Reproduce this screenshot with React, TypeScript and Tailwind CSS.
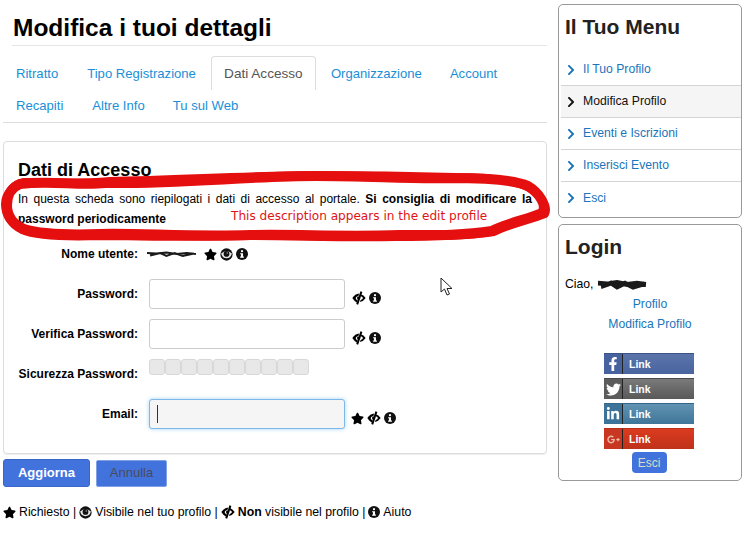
import { FaChevronRight, FaFacebookF, FaGooglePlusG, FaLinkedinIn, FaStar, FaTwitter } from 'react-icons/fa'
import { FC, ReactNode } from 'react'

const Star = () => <FaStar className="inline-block size-[13px] shrink-0 text-black" />

const Eye = () => (
    <svg viewBox="0 0 14 14" className="inline-block size-[13px] shrink-0">
        <circle cx="7" cy="7" r="6.6" fill="#111" />
        <path d="M1.2 6Q7 1.2 12.8 6Q11.5 11 7 11Q2.5 11 1.2 6Z" fill="#e8e8e8" />
        <circle cx="7" cy="6.4" r="3.1" fill="#111" />
        <circle cx="7.8" cy="5.4" r="0.8" fill="#aaa" />
    </svg>
)

const EyeOff = () => (
    <svg viewBox="0 0 14 14" className="inline-block size-[14px] shrink-0">
        <path d="M0.3 7Q3 3 7.2 2.6L6.4 5Q4.2 5.4 3.6 7Q4 8.6 5.6 9.4L4.9 11.4Q2 10 0.3 7Z" fill="#000" />
        <path d="M8.3 3Q11.8 4 13.7 7Q11.8 10 8 11L8.6 9Q10.5 8.4 11 7Q10.5 5.6 8.9 5.2Z" fill="#000" />
        <path d="M9.4 0.6L5.2 13.4" stroke="#000" strokeWidth="2" />
        <circle cx="6.6" cy="7" r="1.6" fill="#000" />
    </svg>
)

const Info = () => (
    <svg viewBox="0 0 14 14" className="inline-block size-[12px] shrink-0">
        <circle cx="7" cy="7" r="7" fill="#111" />
        <rect x="5.8" y="2.6" width="2.4" height="2.2" fill="#fff" />
        <path d="M4.8 6h3.4v4h1v1.4H4.8V10h1V7.4h-1Z" fill="#fff" />
    </svg>
)

// pen strokes hiding a user name
const Scribble = ({ width, height, heavy }: { width: number; height: number; heavy?: boolean }) => (
    <svg viewBox="0 0 50 8" width={width} height={height} preserveAspectRatio="none" className="shrink-0">
        <path
            d="M1 3L10 3.5L20 2.5L30 4L40 3L49 4M4 5.5L14 3L20 6L28 3L36 6L47 3.5"
            fill="none"
            stroke="#1a1a1a"
            strokeWidth={heavy ? 3.5 : 2}
        />
    </svg>
)

const Row: FC<{ label: string; children: ReactNode }> = ({ label, children }) => (
    <div className="flex h-10 items-center">
        <div className="w-[134px] text-right text-[12px] font-bold">{label}</div>
        <div className="ml-[11px] flex items-center">{children}</div>
    </div>
)

const Input = ({ focused }: { focused?: boolean }) => (
    <div
        className={
            focused
                ? 'flex h-[30px] w-[196px] items-center rounded-[3px] border border-[#7db8ea] bg-[#f5f5f5] pl-[7px] shadow-[0_0_4px_#a8d4f5]'
                : 'h-[30px] w-[196px] rounded-[3px] border border-[#cccccc] bg-white'
        }
    >
        {focused && <span className="h-[18px] w-px bg-[#333]" />}
    </div>
)

const menu = ['Il Tuo Profilo', 'Modifica Profilo', 'Eventi e Iscrizioni', 'Inserisci Evento', 'Esci']

const socials = [
    { icon: <FaFacebookF className="size-[14px]" />, left: 'bg-[#46639f]', right: 'bg-gradient-to-b from-[#5a74ab] to-[#4a659f]', top: 'border-[#3a5488]' },
    { icon: <FaTwitter className="size-[15px]" />, left: 'bg-[#5c5c5c]', right: 'bg-gradient-to-b from-[#7a7a7a] to-[#595959]', top: 'border-[#4a4a4a]' },
    { icon: <FaLinkedinIn className="size-[14px]" />, left: 'bg-[#3d7399]', right: 'bg-gradient-to-b from-[#6193b3] to-[#3f7598]', top: 'border-[#336688]' },
    { icon: <FaGooglePlusG className="size-[13px] text-[#f2b8a8]" />, left: 'bg-[#c73722]', right: 'bg-gradient-to-b from-[#da3b20] to-[#bf3219]', top: 'border-[#b83018]' },
]

const tabLink = 'block px-[13px] text-[13.1px] text-[#1a8fd6]'

export default function App() {
    return (
        <div className="relative h-[549px] w-[749px] overflow-hidden bg-white font-['Liberation_Sans',sans-serif] text-black">
            <div className="flex gap-[11px] pl-[3px] pt-1">
                <main className="w-[544px]">
                    <div className="ml-[9px] border-b border-[#e5e5e5] pb-[2px] pt-[8px]">
                        <h1 className="pl-px text-[24.5px] font-bold leading-[31px]">Modifica i tuoi dettagli</h1>
                    </div>
                    <nav className="mt-[10px] border-b border-[#dddddd]">
                        <ul className="flex gap-[2px] leading-[33px]">
                            <li className="pt-px"><a className={tabLink}>Ritratto</a></li>
                            <li className="ml-px pt-px"><a className={tabLink}>Tipo Registrazione</a></li>
                            <li className="w-[105px] rounded-t-[4px] border border-b-0 border-[#dddddd] text-center">
                                <a className="block text-[13.6px] text-[#555555]">Dati Accesso</a>
                            </li>
                            <li className="pt-px"><a className={tabLink}>Organizzazione</a></li>
                            <li className="pt-px"><a className={tabLink}>Account</a></li>
                        </ul>
                        <ul className="flex gap-[2px] leading-[32px]">
                            <li><a className={tabLink}>Recapiti</a></li>
                            <li className="ml-px"><a className={tabLink}>Altre Info</a></li>
                            <li><a className={tabLink}>Tu sul Web</a></li>
                        </ul>
                    </nav>

                    <section className="mt-[18px] h-[313px] rounded-[4px] border border-[#dddddd] px-[14px] pt-[17px] shadow-[0_1px_1px_#eee]">
                        <h2 className="text-[18px] font-bold leading-[22px]">Dati di Accesso</h2>
                        <p className="mt-[8px] text-justify text-[12px] leading-[20px]">
                            In questa scheda sono riepilogati i dati di accesso al portale.{' '}
                            <b>Si consiglia di modificare la password periodicamente</b>
                        </p>
                        <div className="-ml-[14px] mt-[5px]">
                            <Row label="Nome utente:">
                                <span className="-ml-[3px] flex items-center">
                                    <Scribble width={51} height={8} />
                                    <span className="ml-[7px] flex items-center gap-[3px]"><Star /><Eye /><Info /></span>
                                </span>
                            </Row>
                            <Row label="Password:">
                                <Input />
                                <span className="ml-[7px] mt-[8px] flex items-center gap-[3px]"><EyeOff /><Info /></span>
                            </Row>
                            <Row label="Verifica Password:">
                                <Input />
                                <span className="ml-[7px] mt-[8px] flex items-center gap-[3px]"><EyeOff /><Info /></span>
                            </Row>
                            <Row label="Sicurezza Password:">
                                <div className="-mt-[14px] flex">
                                    {Array.from({ length: 10 }).map((_, i) => (
                                        <span key={i} className="h-4 w-4 rounded-[3px] border border-[#d8d8d8] bg-[#e8e8e8]" />
                                    ))}
                                </div>
                            </Row>
                            <Row label="Email:">
                                <Input focused />
                                <span className="ml-[6px] mt-[8px] flex items-center gap-[3px]"><Star /><EyeOff /><Info /></span>
                            </Row>
                        </div>
                    </section>

                    <div className="mt-[5px] flex items-center gap-[6px]">
                        <button className="h-[28px] w-[87px] rounded-[3px] border border-[#3a66c8] bg-[#4273dc] text-[13px] font-bold text-white">Aggiorna</button>
                        <button className="h-[27px] w-[71px] rounded-[2px] border border-[#7fa0e6] bg-[#4273dc] text-[13px] text-[#4a4a5a]">Annulla</button>
                    </div>

                    <p className="mt-[18px] flex items-center gap-[3px] whitespace-pre text-[12.3px] leading-[14px]">
                        <Star /> <span>Richiesto |</span> <Eye /> <span>Visibile nel tuo profilo |</span> <EyeOff />
                        <span><b>Non</b> visibile nel profilo |</span> <Info /> <span>Aiuto</span>
                    </p>
                </main>

                <aside className="w-[184px]">
                    <div className="h-[214px] rounded-[5px] border border-[#999999] pl-[2px]">
                        <h3 className="pl-[4px] pt-[9px] text-[21px] font-bold leading-[26px] text-[#222222]">Il Tuo Menu</h3>
                        <ul className="mt-[14px]">
                            {menu.map((item, i) => (
                                <li
                                    key={item}
                                    className={`flex h-8 items-center gap-[6px] pl-[4px] text-[12.2px] ${i < 4 ? 'border-b border-[#d4d4d4]' : ''} ${i === 1 ? 'bg-[#f5f5f5] text-[#111111]' : 'text-[#1a75bb]'}`}
                                >
                                    <FaChevronRight className="size-[12px]" />
                                    {item}
                                </li>
                            ))}
                        </ul>
                    </div>

                    <div className="mt-[6px] h-[257px] rounded-[5px] border border-[#999999]">
                        <h3 className="pl-[6px] pt-[9px] text-[21px] font-bold leading-[26px] text-[#222222]">Login</h3>
                        <p className="mt-[17px] flex items-center pl-[6px] text-[12.2px] leading-[14px]">
                            Ciao,&nbsp;<Scribble width={50} height={11} heavy />
                        </p>
                        <div className="mt-[3px] text-center text-[12.2px] leading-[20px] text-[#1a75bb]">
                            <div>Profilo</div>
                            <div>Modifica Profilo</div>
                        </div>
                        <div className="mt-[19px] flex flex-col items-center gap-1 pr-[2px]">
                            {socials.map((s, i) => (
                                <div key={i} className={`flex h-[21px] w-[90px] border-t text-white ${s.top}`}>
                                    <span className={`flex w-[19px] items-center justify-center border-r border-[#222] ${s.left}`}>{s.icon}</span>
                                    <span className={`flex-1 pl-[6px] text-[10.5px] font-bold leading-[20px] ${s.right}`}>Link</span>
                                </div>
                            ))}
                        </div>
                        <div className="mt-[3px] flex justify-center pr-[2px]">
                            <span className="flex h-[21px] w-[35px] items-center justify-center rounded-[4px] bg-[#4273dc] text-[12px] text-[#d8dcc8]">Esci</span>
                        </div>
                    </div>
                </aside>
            </div>

            {/* red marker ring drawn over the screenshot */}
            <svg viewBox="0 0 749 549" className="pointer-events-none absolute inset-0 h-[549px] w-[749px]">
                <path
                    d="M20 184C50 180 80 186 105 183C180 184 250 176 316 176C370 176 410 179 450 178C490 178 515 180 528 186C538 192 548 205 542 213C528 219 505 224 492 231C460 236 430 235 400 235C340 237 300 234 250 235C190 237 140 233 100 234C70 235 40 234 24 229C12 224 7 215 7 205C7 195 12 187 20 184Z"
                    fill="none"
                    stroke="#e50f0f"
                    strokeWidth="10"
                    strokeLinejoin="round"
                />
                <path
                    d="M24 182C60 183 90 183 110 181C180 180 250 175 320 175C380 175 420 176 455 177C490 177 520 181 532 190C540 196 549 206 545 214C530 220 510 224 494 232C460 237 420 237 395 237C340 238 300 236 250 236C190 238 140 236 100 236C70 237 36 236 22 230C10 224 5 214 5 204C5 194 14 184 24 182Z"
                    fill="none"
                    stroke="#e50f0f"
                    strokeWidth="8"
                    strokeLinejoin="round"
                />
            </svg>
            <span className="absolute left-[231px] top-[208px] font-['DejaVu_Sans',sans-serif] text-[12.1px] leading-[16px] text-[#e01414]">
                This description appears in the edit profile
            </span>
            <svg viewBox="0 0 14 20" className="absolute left-[440px] top-[277px] h-[20px] w-[14px]">
                <path d="M1 1L1 15L4.5 12L7 18L9.5 17L7 11.5L12 11.5Z" fill="#fff" stroke="#222" strokeWidth="1" />
            </svg>
        </div>
    )
}
